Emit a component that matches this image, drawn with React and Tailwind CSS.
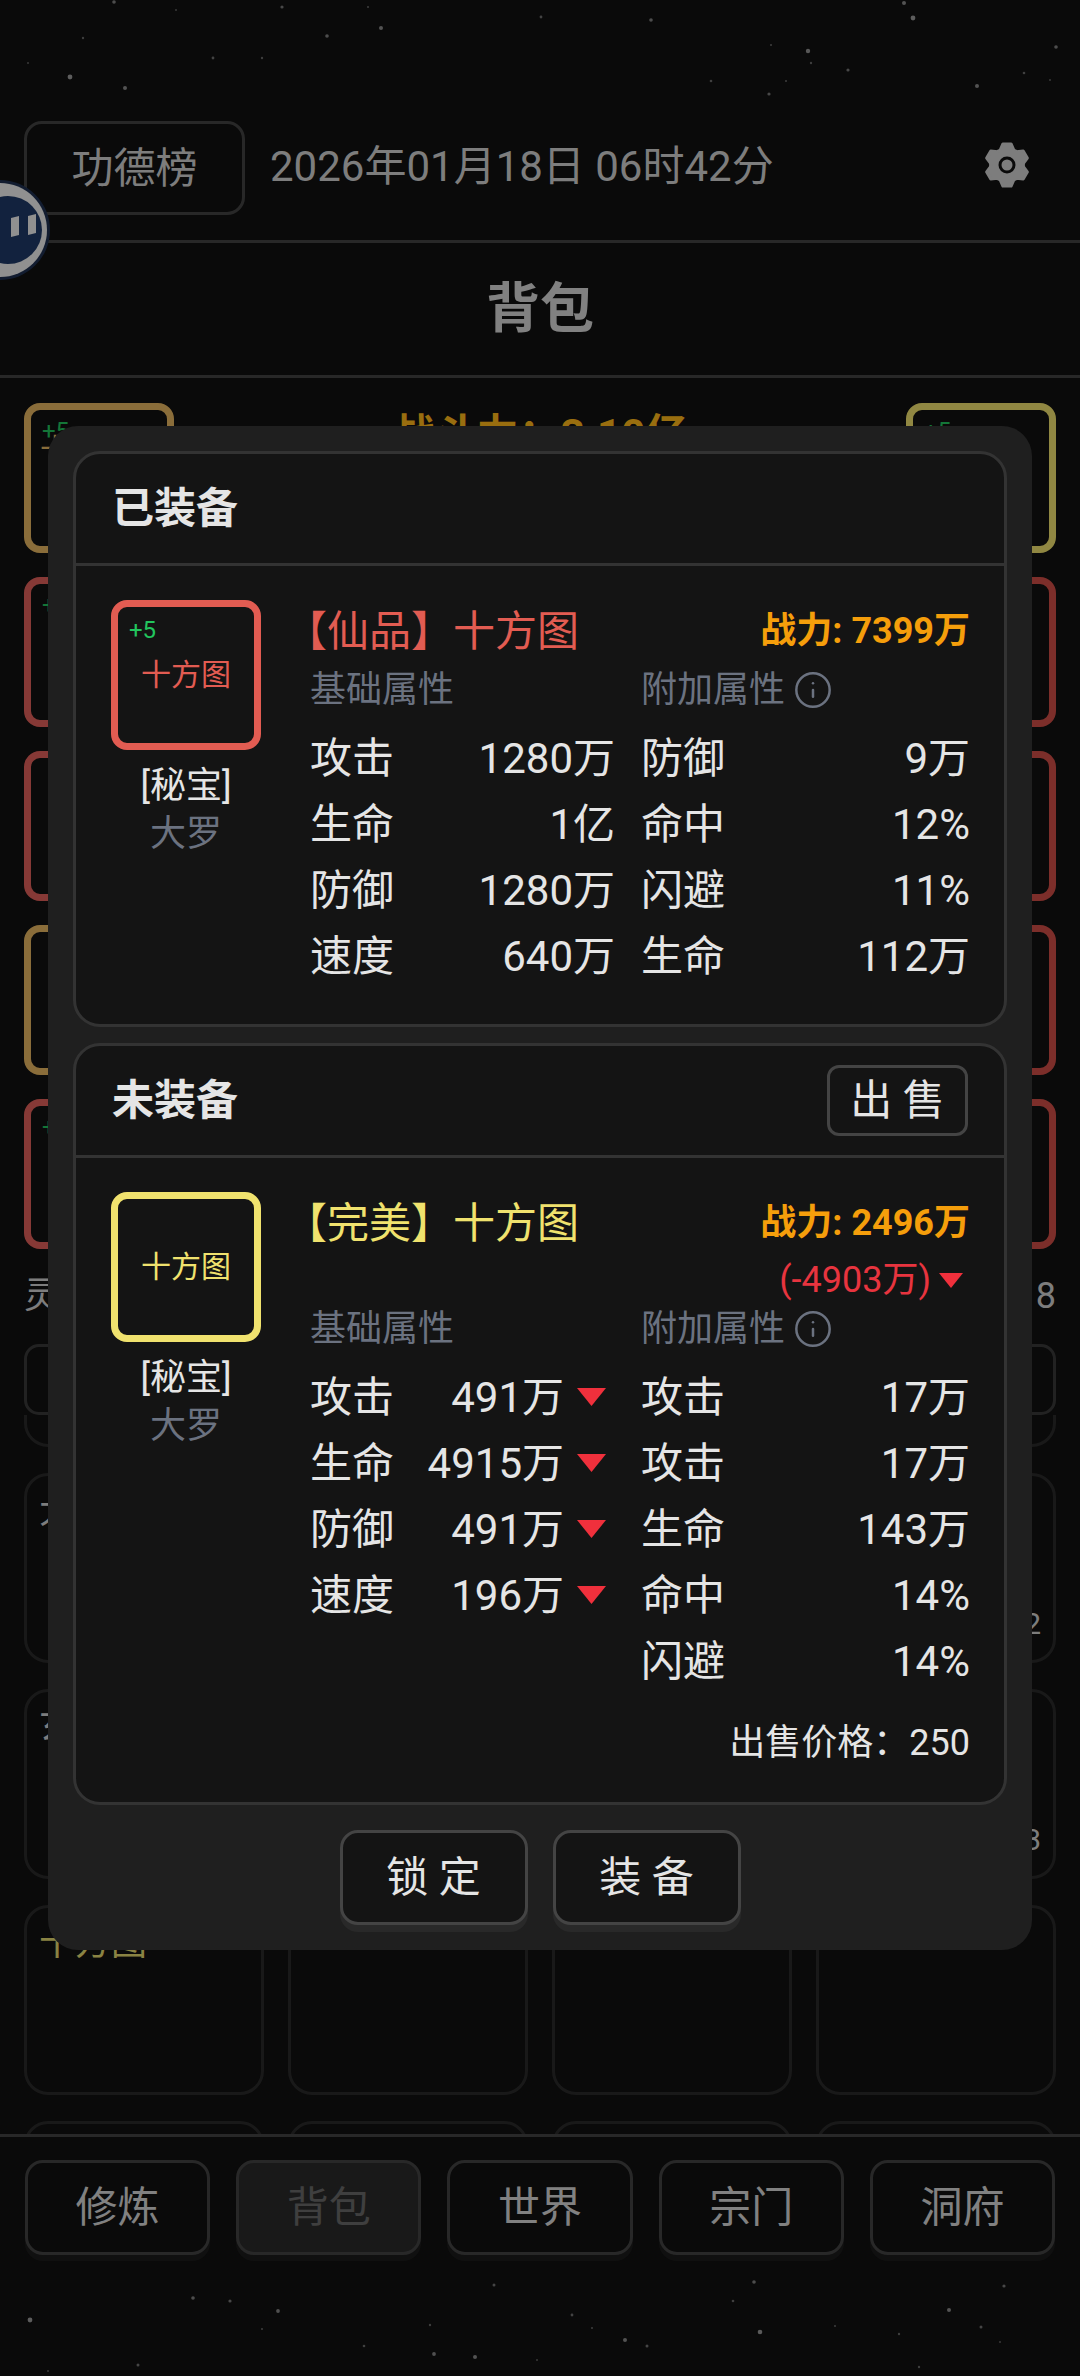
import React from "react";
import { Info } from "lucide-react";

const topStars = [[70,77,2.4],[125,88,2],[282,7,1.6],[381,28,2],[327,36,1.8],[541,17,1.4],[651,20,1.8],[913,18,2.4],[904,3,2],[1056,47,1.8],[808,51,2.2],[848,70,1.6],[811,63,1.2],[977,86,2],[711,81,1.3],[769,94,1.6],[213,58,1.4],[262,58,1.2],[83,38,1.2],[114,2,1.8],[28,63,1],[368,7,1.1],[1024,73,1.3],[786,81,1.1],[771,45,1.1],[1050,80,1],[176,10,1]];
const bottomStars = [[30,2320,2.4],[193,2298,1.8],[230,2301,1.6],[278,2311,1.9],[262,2329,1.1],[430,2325,1.2],[364,2346,1.3],[434,2354,1.9],[475,2357,2],[138,2365,1.5],[494,2285,1.5],[572,2315,1.4],[592,2328,1.1],[625,2340,2],[647,2346,1.5],[754,2282,1.8],[733,2301,1.3],[760,2332,2.3],[835,2326,1.1],[949,2310,2],[1004,2286,1.6],[981,2327,1.5],[899,2334,1.2],[537,2360,1],[48,2371,1],[919,2367,1.2],[1000,2342,1]];

const gearPoints = (() => {
  const pts = [];
  for (let i = 0; i < 6; i++) {
    const a = -90 + i * 60;
    [[-24, 16.5], [-11, 21.5], [11, 21.5], [24, 16.5]].forEach(([d, r]) => {
      const t = ((a + d) * Math.PI) / 180;
      pts.push(`${(24 + r * Math.cos(t)).toFixed(2)},${(24 + r * Math.sin(t)).toFixed(2)}`);
    });
  }
  return pts.join(" ");
})();

function Gear() {
  return (
    <svg viewBox="0 0 48 48" className="w-[48px] h-[48px] shrink-0">
      <polygon points={gearPoints} fill="#d0d0d0" stroke="#d0d0d0" strokeWidth="3" strokeLinejoin="round" />
      <circle cx="24" cy="24" r="7" fill="#d0d0d0" stroke="#111111" strokeWidth="3" />
    </svg>
  );
}

function Avatar() {
  return (
    <svg viewBox="0 0 60 110" className="absolute left-0 top-[175px] w-[60px] h-[110px]">
      <circle cx="0" cy="55" r="50" fill="#1e3050" />
      <circle cx="0" cy="55" r="47" fill="#f0f0f0" />
      <circle cx="8" cy="55" r="34" fill="#1f3a68" />
      <polygon points="11,43 19,41 19,60 11,62" fill="#f0f0f0" />
      <polygon points="28,41 36,39 36,58 28,60" fill="#f0f0f0" />
    </svg>
  );
}

function Down({ className }) {
  return (
    <svg viewBox="0 0 29 18" className={className}>
      <polygon points="0,0 29,0 14.5,18" fill="#f0303c" />
    </svg>
  );
}

function Slot({ color, plus, text, textClass }) {
  return (
    <div className={`relative w-[150px] h-[150px] rounded-[16px] border-[7px] ${color} px-[9px]`}>
      {plus && <span className="absolute left-[11px] top-[11px] text-[24px] leading-[20px] text-[#22c55e]">+5</span>}
      {text && <div className={`text-[30px] leading-[16px] whitespace-nowrap ${textClass}`}>{text}</div>}
    </div>
  );
}

function GridCard({ title, titleClass, count }) {
  return (
    <div className="relative h-[190px] rounded-[24px] border-[3px] border-[#2b2b2b] px-[12px] pt-[11px]">
      {title && <div className={`text-[36px] leading-[48px] ${titleClass}`}>{title}</div>}
      {count && <span className="absolute right-[12px] bottom-[18px] text-[30px] leading-[36px] text-[#d0d0d0]">{count}</span>}
    </div>
  );
}

function ItemBox({ color, plus }) {
  return (
    <div className="w-[150px] shrink-0">
      <div className={`relative w-[150px] h-[150px] rounded-[16px] border-[7px] pb-[2px] flex items-center justify-center text-[30px] ${color}`}>
        {plus && <span className="absolute left-[11px] top-[9px] text-[24px] leading-[28px] text-[#22c55e]">+5</span>}
        十方图
      </div>
      <div className="mt-[12px] text-center text-[36px] leading-[48px] text-[#e5e5e5]">[秘宝]</div>
      <div className="text-center text-[36px] leading-[48px] text-[#6b7280]">大罗</div>
    </div>
  );
}

function Row({ k, v, down }) {
  return (
    <div className="h-[66px] flex items-center justify-between text-[42px] text-[#e5e5e5]">
      <span>{k}</span>
      {v && (
        <span className={`flex items-center ${down ? "pr-[9px]" : ""}`}>
          {v}
          {down && <Down className="w-[29px] h-[18px] ml-[13px]" />}
        </span>
      )}
    </div>
  );
}

function ItemCard({ heading, action, boxColor, plus, titleColor, quality, power, diff, base, extra, down, labelClass, rowsClass, price }) {
  return (
    <div className="rounded-[27px] border-[3px] border-[#333333] bg-[#141414]">
      <div className="h-[112px] border-b-[3px] border-[#333333] pl-[36px] pr-[36px] flex items-center justify-between">
        <span className="text-[42px] font-bold text-[#e5e5e5]">{heading}</span>
        {action && (
          <span className="w-[141px] h-[71px] rounded-[12px] border-[3px] border-[#444444] flex items-center justify-center text-[42px] text-[#e5e5e5]">{action}</span>
        )}
      </div>
      <div className="pt-[34px] pb-[35px] pl-[35px] pr-[34px] flex">
        <ItemBox color={boxColor} plus={plus} />
        <div className="ml-[49px] flex-1 min-w-0">
          <div className="h-[62px] flex items-center justify-between">
            <span className={`-ml-[25px] text-[42px] ${titleColor}`}>{quality}十方图</span>
            <span className="text-[36px] font-bold text-[#f59e0b]">战力: {power}</span>
          </div>
          {diff && (
            <div className="h-[52px] flex items-center justify-end text-[36px] text-[#e8343f]">
              {diff}
              <Down className="w-[24px] h-[17px] ml-[8px] mr-[7px]" />
            </div>
          )}
          <div className={`grid grid-cols-[305px_329px] gap-x-[26px] text-[36px] leading-none text-[#6b7280] ${labelClass}`}>
            <span className="flex items-center">基础属性</span>
            <span className="flex items-center">
              附加属性
              <Info size={40} strokeWidth={1.5} className="ml-[8px]" />
            </span>
          </div>
          <div className={`grid grid-cols-[305px_329px] gap-x-[26px] ${rowsClass}`}>
            <div>
              {base.map(([k, v]) => (
                <Row key={k} k={k} v={v} down={down} />
              ))}
            </div>
            <div>
              {extra.map(([k, v], i) => (
                <Row key={i} k={k} v={v} />
              ))}
            </div>
          </div>
          {price && (
            <div className="mt-[25px] h-[48px] flex items-center justify-end text-[36px] text-[#e5e5e5]">{price}</div>
          )}
        </div>
      </div>
    </div>
  );
}

const navBtn = "flex-1 h-[95px] rounded-[18px] border-[3px] border-[#444444] flex items-center justify-center text-[42px] text-[#d8d8d8] shadow-[0_6px_0_#1c1c1c]";

export default function App() {
  return (
    <div
      className="relative w-[1080px] h-[2376px] overflow-hidden bg-[#111111]"
      style={{ fontFamily: 'Roboto, "Noto Sans CJK SC", sans-serif' }}
    >
      <svg className="absolute inset-0 w-[1080px] h-[2376px]" viewBox="0 0 1080 2376">
        {[...topStars, ...bottomStars].map(([x, y, r], i) => (
          <circle key={i} cx={x} cy={y} r={r} fill="#ffffff" fillOpacity={0.15 + r * 0.18} />
        ))}
      </svg>

      <div className="relative flex flex-col h-full pt-[121px]">
        <div className="h-[122px] shrink-0 border-b-[3px] border-[#444444] px-[24px] flex items-start">
          <div className="w-[221px] h-[94px] rounded-[18px] border-[3px] border-[#444444] flex items-center justify-center text-[42px] text-[#d0d0d0]">功德榜</div>
          <span className="ml-[25px] h-[90px] flex items-center text-[42px] text-[#d0d0d0]">2026年01月18日 06时42分</span>
          <div className="ml-auto mr-[25px] mt-[20px]">
            <Gear />
          </div>
        </div>
        <div className="h-[135px] shrink-0 border-b-[3px] border-[#444444] flex items-center justify-center text-[54px] font-bold text-[#d8d8d8]">背包</div>

        <div className="flex-1 min-h-0 overflow-hidden px-[24px] pt-[25px]">
          <div className="flex justify-between">
            <div className="flex flex-col gap-[24px]">
              <Slot color="border-[#e6b662]" plus text="十方图" textClass="text-[#e6b662] pt-[32px] !leading-[16px]" />
              <Slot color="border-[#e0605a]" plus />
              <Slot color="border-[#e0605a]" />
              <Slot color="border-[#e6b662]" />
              <Slot color="border-[#e0605a]" plus />
            </div>
            <div className="pt-[5px] text-[42px] leading-[54px] font-bold text-[#ffb81a]">战斗力：3.10亿</div>
            <div className="flex flex-col gap-[24px]">
              <Slot color="border-[#f0e26e]" plus />
              <Slot color="border-[#cf4d46]" />
              <Slot color="border-[#cf4d46]" />
              <Slot color="border-[#cf4d46]" />
              <Slot color="border-[#cf4d46]" />
            </div>
          </div>
          <div className="mt-[23px] h-[48px] flex items-center justify-between text-[36px] text-[#d0d0d0]">
            <span>灵石</span>
            <span>8</span>
          </div>
          <div className="mt-[24px] h-[71px] rounded-[15px] border-[3px] border-[#3a3a3a]"></div>
          <div className="h-[720px] overflow-hidden">
            <div className="-mt-[158px] grid grid-cols-4 gap-x-[24px] gap-y-[26px]">
              <GridCard />
              <GridCard />
              <GridCard />
              <GridCard />
              <GridCard title="大" titleClass="text-[#d0d0d0]" />
              <GridCard />
              <GridCard />
              <GridCard count="2" />
              <GridCard title="玄" titleClass="text-[#d0d0d0]" />
              <GridCard />
              <GridCard />
              <GridCard count="3" />
              <GridCard title="十方图" titleClass="text-[#e6da70]" />
              <GridCard />
              <GridCard />
              <GridCard />
              <GridCard />
              <GridCard />
              <GridCard />
              <GridCard />
            </div>
          </div>
        </div>

        <div className="h-[242px] shrink-0 border-t-[3px] border-[#444444] px-[25px] pt-[23px]">
          <div className="flex gap-[26px]">
            <div className={navBtn}>修炼</div>
            <div className={`${navBtn} bg-[#2a2a2a] !text-[#6a6a6a]`}>背包</div>
            <div className={navBtn}>世界</div>
            <div className={navBtn}>宗门</div>
            <div className={navBtn}>洞府</div>
          </div>
        </div>
      </div>

      <Avatar />

      <div className="absolute inset-0 bg-black/40"></div>

      <div className="absolute left-[48px] top-[426px] w-[984px] rounded-[30px] bg-[#1f1f1f] px-[25px] pt-[25px] pb-[25px]">
        <div className="flex flex-col gap-[16px]">
          <ItemCard
            heading="已装备"
            boxColor="border-[#e25c52] text-[#e25c52]"
            plus
            titleColor="text-[#e25c52]"
            quality="【仙品】"
            power="7399万"
            labelClass="h-[55px]"
            rowsClass="mt-[8px]"
            base={[["攻击", "1280万"], ["生命", "1亿"], ["防御", "1280万"], ["速度", "640万"]]}
            extra={[["防御", "9万"], ["命中", "12%"], ["闪避", "11%"], ["生命", "112万"]]}
          />
          <ItemCard
            heading="未装备"
            action="出 售"
            boxColor="border-[#f0e26e] text-[#f0e26e]"
            titleColor="text-[#f0e26e]"
            quality="【完美】"
            power="2496万"
            diff="(-4903万)"
            down
            labelClass="h-[45px]"
            rowsClass="mt-[13px]"
            base={[["攻击", "491万"], ["生命", "4915万"], ["防御", "491万"], ["速度", "196万"]]}
            extra={[["攻击", "17万"], ["攻击", "17万"], ["生命", "143万"], ["命中", "14%"], ["闪避", "14%"]]}
            price="出售价格：250"
          />
        </div>
        <div className="mt-[25px] flex justify-center gap-[25px]">
          <span className="w-[188px] h-[95px] rounded-[18px] border-[3px] border-[#444444] bg-[#141414] shadow-[0_7px_0_#292929] flex items-center justify-center text-[42px] text-[#e5e5e5]">锁 定</span>
          <span className="w-[188px] h-[95px] rounded-[18px] border-[3px] border-[#444444] bg-[#141414] shadow-[0_7px_0_#292929] flex items-center justify-center text-[42px] text-[#e5e5e5]">装 备</span>
        </div>
      </div>
    </div>
  );
}
